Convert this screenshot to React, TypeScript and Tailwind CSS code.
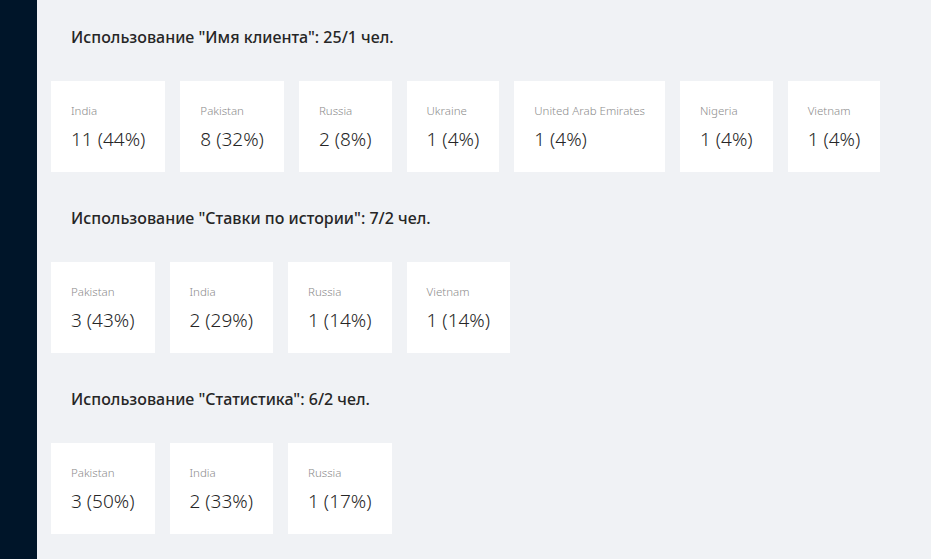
import React from "react";

type Item = { country: string; count: number; pct: number };

type Section = { title: string; items: Item[] };

const sections: Section[] = [
  {
    title: 'Использование "Имя клиента": 25/1 чел.',
    items: [
      { country: "India", count: 11, pct: 44 },
      { country: "Pakistan", count: 8, pct: 32 },
      { country: "Russia", count: 2, pct: 8 },
      { country: "Ukraine", count: 1, pct: 4 },
      { country: "United Arab Emirates", count: 1, pct: 4 },
      { country: "Nigeria", count: 1, pct: 4 },
      { country: "Vietnam", count: 1, pct: 4 },
    ],
  },
  {
    title: 'Использование "Ставки по истории": 7/2 чел.',
    items: [
      { country: "Pakistan", count: 3, pct: 43 },
      { country: "India", count: 2, pct: 29 },
      { country: "Russia", count: 1, pct: 14 },
      { country: "Vietnam", count: 1, pct: 14 },
    ],
  },
  {
    title: 'Использование "Статистика": 6/2 чел.',
    items: [
      { country: "Pakistan", count: 3, pct: 50 },
      { country: "India", count: 2, pct: 33 },
      { country: "Russia", count: 1, pct: 17 },
    ],
  },
];

function StatCard({ item }: { item: Item }) {
  return (
    <div className="bg-white px-5 pt-5 pb-5">
      <div className="text-[11.5px] leading-[19px] font-light text-[#8c8c8c] whitespace-nowrap">
        {item.country}
      </div>
      <div className="mt-[6px] text-[19px] leading-[26px] font-light text-[#262626] whitespace-nowrap">
        {item.count} ({item.pct}%)
      </div>
    </div>
  );
}

export default function App() {
  return (
    <div
      className="flex min-h-screen w-full"
      style={{ fontFamily: '"Noto Sans", "Open Sans", Arial, sans-serif' }}
    >
      <aside className="w-[37px] shrink-0 bg-[#001529]" />
      <main className="flex-1 bg-[#f0f2f5] pl-[14px] pt-[25px] pb-6">
        <div className="flex flex-col gap-[34px]">
          {sections.map((section) => (
            <section key={section.title}>
              <h2 className="pl-5 text-[16px] leading-6 font-medium text-[#262626]">
                {section.title}
              </h2>
              <div className="mt-8 flex gap-[15px]">
                {section.items.map((item) => (
                  <StatCard key={item.country} item={item} />
                ))}
              </div>
            </section>
          ))}
        </div>
      </main>
    </div>
  );
}
